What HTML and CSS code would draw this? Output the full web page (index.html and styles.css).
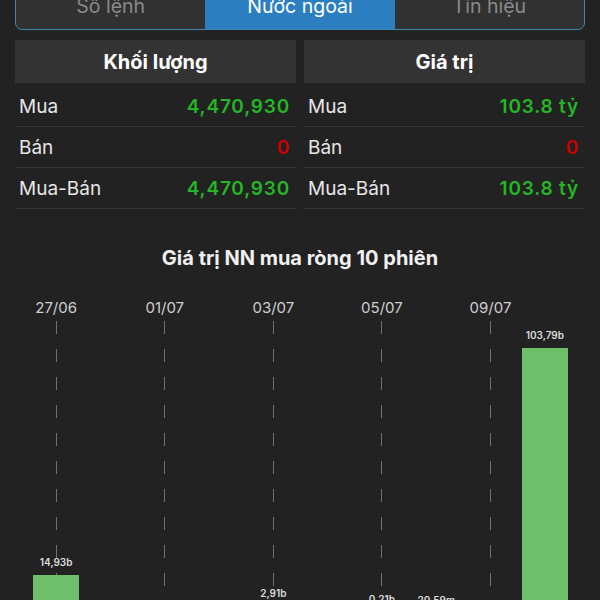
FILE: index.html
```html
<!doctype html>
<html>
<head>
<meta charset="utf-8">
<title>Nước ngoài</title>
<link rel="stylesheet" href="styles.css">
</head>
<body>

<div class="tabs">
  <div class="tab">Sổ lệnh</div>
  <div class="tab active">Nước ngoài</div>
  <div class="tab">Tín hiệu</div>
</div>

<div class="summary">
  <div class="panel">
    <div class="head">Khối lượng</div>
    <div class="row"><span>Mua</span><span class="up">4,470,930</span></div>
    <div class="row"><span>Bán</span><span class="down">0</span></div>
    <div class="row"><span>Mua-Bán</span><span class="up">4,470,930</span></div>
  </div>
  <div class="panel">
    <div class="head">Giá trị</div>
    <div class="row"><span>Mua</span><span class="up">103.8 tỷ</span></div>
    <div class="row"><span>Bán</span><span class="down">0</span></div>
    <div class="row"><span>Mua-Bán</span><span class="up">103.8 tỷ</span></div>
  </div>
</div>

<h2 class="title">Giá trị NN mua ròng 10 phiên</h2>

<div class="chart">
  <div class="col tick">
    <div class="date">27/06</div>
    <div class="plot"><div class="val">14,93b</div><div class="bar" style="height:38px"></div></div>
  </div>
  <div class="col">
    <div class="date"></div>
    <div class="plot"></div>
  </div>
  <div class="col tick">
    <div class="date">01/07</div>
    <div class="plot"></div>
  </div>
  <div class="col">
    <div class="date"></div>
    <div class="plot"></div>
  </div>
  <div class="col tick">
    <div class="date">03/07</div>
    <div class="plot"><div class="val">2,91b</div><div class="bar" style="height:7px"></div></div>
  </div>
  <div class="col">
    <div class="date"></div>
    <div class="plot"></div>
  </div>
  <div class="col tick">
    <div class="date">05/07</div>
    <div class="plot"><div class="val">0,21b</div><div class="bar" style="height:1px"></div></div>
  </div>
  <div class="col">
    <div class="date"></div>
    <div class="plot"><div class="val">20,59m</div><div class="bar" style="height:0px"></div></div>
  </div>
  <div class="col tick">
    <div class="date">09/07</div>
    <div class="plot"></div>
  </div>
  <div class="col">
    <div class="date"></div>
    <div class="plot"><div class="val">103,79b</div><div class="bar" style="height:265px"></div></div>
  </div>
</div>

</body>
</html>
```

FILE: styles.css
```css
body {
	margin: 0;
	padding: 0 15px;
	height: 600px;
	overflow: hidden;
	background: #222222;
	color: #e8e8e8;
	font-family: Inter, "Noto Sans", sans-serif;
}

.tabs {
	display: flex;
	height: 46px;
	margin-top: -18px;
	border: 1.5px solid #3f86a8;
	border-radius: 7px;
	background: #313131;
	overflow: hidden;
}
.tab {
	flex: 1;
	display: flex;
	align-items: center;
	justify-content: center;
	font-size: 19.5px;
	color: #8a8a8a;
}
.tab.active {
	background: #2b7fc1;
	color: #ffffff;
}

.summary {
	display: flex;
	gap: 8px;
	margin-top: 10px;
}
.panel {
	flex: 1;
}
.head {
	height: 43px;
	margin-bottom: 3px;
	display: flex;
	align-items: center;
	justify-content: center;
	background: #333333;
	font-size: 20px;
	font-weight: 700;
	color: #ffffff;
}
.row {
	display: flex;
	justify-content: space-between;
	align-items: center;
	height: 40px;
	padding: 0 6px 0 4px;
	border-bottom: 1px solid #353535;
	font-size: 19px;
	color: #e6e6e6;
}
.up,
.down {
	font-weight: 600;
	letter-spacing: 0.8px;
}
.up {
	color: #24b624;
}
.down {
	color: #cc0000;
}

.title {
	margin: 37px 0 0;
	height: 24px;
	line-height: 24px;
	text-align: center;
	font-size: 20px;
	font-weight: 700;
	color: #f0f0f0;
}

.chart {
	display: grid;
	grid-template-columns: repeat(10, 1fr);
	margin: 28px 13px 0 14px;
}
.col {
	display: flex;
	flex-direction: column;
	align-items: center;
}
.date {
	height: 23px;
	line-height: 20px;
	font-size: 15px;
	color: #cfcfcf;
}
.plot {
	width: 100%;
	height: 292px;
	display: flex;
	flex-direction: column;
	justify-content: flex-end;
	align-items: center;
}
.tick .plot {
	background: repeating-linear-gradient(to bottom, #707070 0 13px, transparent 13px 28px) center top / 1px 100% no-repeat;
}
.val {
	margin-bottom: 7px;
	line-height: 12px;
	font-size: 10px;
	font-weight: 600;
	color: #dddddd;
}
.bar {
	width: 46px;
	background: #6ebf69;
}
```
